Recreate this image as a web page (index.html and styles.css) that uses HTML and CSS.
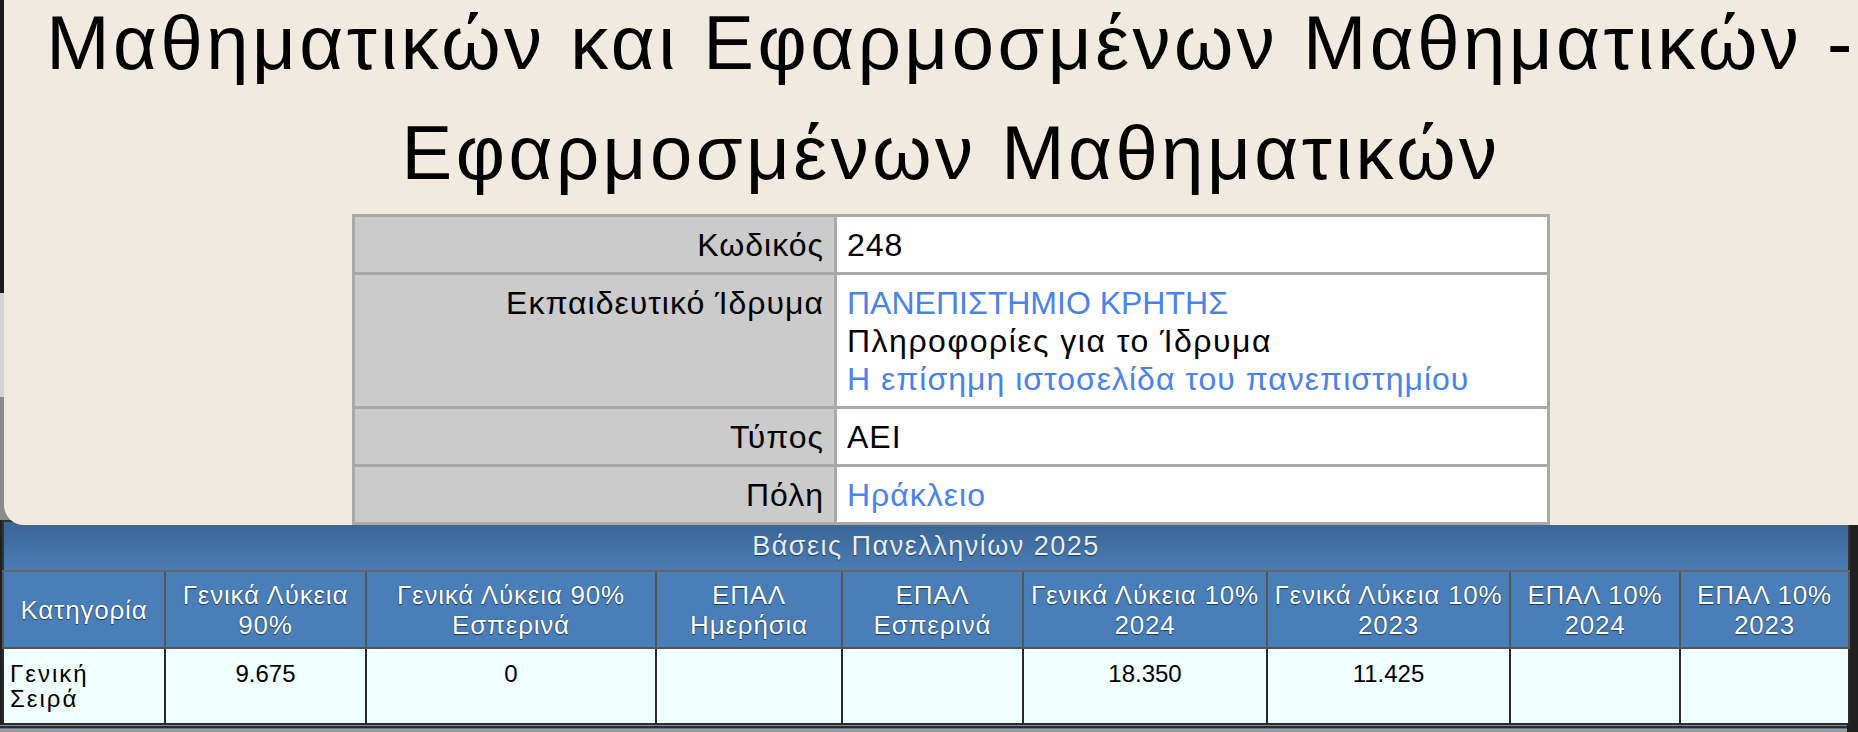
FILE: index.html
```html
<!DOCTYPE html>
<html lang="el">
<head>
<meta charset="utf-8">
<title>Μαθηματικών και Εφαρμοσμένων Μαθηματικών</title>
<link rel="stylesheet" href="styles.css">
</head>
<body>
<div class="screen">
  <div class="top">
    <div class="edge">
      <div class="edge-dark"></div>
      <div class="edge-light"></div>
      <div class="edge-mid"></div>
    </div>
    <div class="panel">
      <h1 class="title">Μαθηματικών και Εφαρμοσμένων Μαθηματικών -<br>Εφαρμοσμένων Μαθηματικών</h1>
      <table class="info">
        <tr>
          <td class="label">Κωδικός</td>
          <td class="value">248</td>
        </tr>
        <tr>
          <td class="label">Εκπαιδευτικό Ίδρυμα</td>
          <td class="value"><a href="#" class="caps">ΠΑΝΕΠΙΣΤΗΜΙΟ ΚΡΗΤΗΣ</a><br><span class="info-line">Πληροφορίες για το Ίδρυμα</span><br><a href="#">Η επίσημη ιστοσελίδα του πανεπιστημίου</a></td>
        </tr>
        <tr>
          <td class="label">Τύπος</td>
          <td class="value">ΑΕΙ</td>
        </tr>
        <tr>
          <td class="label">Πόλη</td>
          <td class="value"><a href="#">Ηράκλειο</a></td>
        </tr>
      </table>
    </div>
  </div>
  <table class="bases">
    <colgroup>
      <col class="c1"><col class="c2"><col class="c3"><col class="c4"><col class="c5"><col class="c6"><col class="c7"><col class="c8"><col class="c9">
    </colgroup>
    <thead>
      <tr class="cap-row"><th colspan="9" class="cap">Βάσεις Πανελληνίων 2025</th></tr>
      <tr class="head-row">
        <th>Κατηγορία</th>
        <th>Γενικά Λύκεια<br>90%</th>
        <th>Γενικά Λύκεια 90%<br>Εσπερινά</th>
        <th>ΕΠΑΛ<br>Ημερήσια</th>
        <th>ΕΠΑΛ<br>Εσπερινά</th>
        <th>Γενικά Λύκεια 10%<br>2024</th>
        <th>Γενικά Λύκεια 10%<br>2023</th>
        <th>ΕΠΑΛ 10%<br>2024</th>
        <th>ΕΠΑΛ 10%<br>2023</th>
      </tr>
    </thead>
    <tbody>
      <tr class="data-row">
        <td class="cat">Γενική<br>Σειρά</td>
        <td>9.675</td>
        <td>0</td>
        <td></td>
        <td></td>
        <td>18.350</td>
        <td>11.425</td>
        <td></td>
        <td></td>
      </tr>
    </tbody>
  </table>
  <div class="below"></div>
</div>
</body>
</html>
```

FILE: styles.css
```css
* { box-sizing: border-box; }
html, body { margin: 0; padding: 0; }
body {
  background: #202020;
  overflow: hidden;
  font-family: "Liberation Sans", Arial, sans-serif;
}
.screen {
  width: 1858px;
  height: 732px;
  overflow: hidden;
  display: flex;
  flex-direction: column;
}
.top {
  display: flex;
  height: 520px;
  flex: none;
  background: #8b8b8b;
  position: relative;
  z-index: 2;
}
.edge {
  width: 4px;
  flex: none;
  display: flex;
  flex-direction: column;
}
.edge-dark { height: 293px; background: #1a1a1a; }
.edge-light { height: 104px; background: #d2d2d2; }
.edge-mid { flex: 1; background: #8b8b8b; }
.panel {
  flex: none;
  width: 1894px;
  height: 525px;
  background: #f0eadf;
  border-bottom-left-radius: 20px;
  overflow: hidden;
  display: flex;
  flex-direction: column;
  align-items: center;
}
.title {
  margin: -12px 0 0;
  font-weight: normal;
  font-size: 76px;
  letter-spacing: 3.5px;
  line-height: 110px;
  text-align: center;
  color: #000;
  white-space: nowrap;
}
.info {
  margin-top: 6px;
  border-collapse: collapse;
  width: 1198px;
  font-size: 32px;
  letter-spacing: 1px;
  color: #000;
}
.info td {
  border: 3px solid #a9a9a9;
  padding: 9px 10px 8px;
  line-height: 38px;
  vertical-align: top;
}
.info .label {
  background: #cbcbcb;
  text-align: right;
  width: 482px;
}
.info .value { background: #fff; }
.info a { color: #4a82ec; text-decoration: none; }
.info .caps { letter-spacing: 0; }
.info .info-line { letter-spacing: 1.5px; }

.bases {
  margin-left: 2px;
  width: 1846px;
  flex: none;
  border-collapse: collapse;
  table-layout: fixed;
  border: 2px solid #333;
  font-size: 26px;
}
.c1 { width: 162px; }
.c2 { width: 201px; }
.c3 { width: 290px; }
.c4 { width: 186px; }
.c5 { width: 181px; }
.c6 { width: 244px; }
.c7 { width: 243px; }
.c8 { width: 170px; }
.c9 { width: 169px; }
.cap {
  height: 50px;
  padding: 0;
  font-weight: normal;
  font-size: 27px;
  letter-spacing: 1.5px;
  color: #e9eef4;
  text-shadow: 0 1px 1px #1d3a5c;
  background: linear-gradient(#3a6594, #4a7cb4);
  border-bottom: 2px solid #646464;
}
.head-row th {
  height: 77px;
  padding: 4px 2px;
  font-weight: normal;
  line-height: 30px;
  letter-spacing: 0.8px;
  color: #fff;
  text-shadow: 0 1px 1px #1a3d66, 0 0 1px #1a3d66;
  background: #4a7eb8;
  border: 2px solid #555;
  vertical-align: middle;
}
.data-row td {
  height: 76px;
  padding: 12px 6px 6px;
  background: #f0ffff;
  color: #000;
  text-align: center;
  vertical-align: top;
  line-height: 25px;
  font-size: 24px;
  border: 2px solid #2a2a2a;
}
.data-row td.cat { text-align: left; letter-spacing: 2px; }
.below {
  flex: none;
  width: 1847px;
  height: 12px;
  background: linear-gradient(#8a8a8a 0 1px, #2b2b2b 1px 3px, #4a7ab0 3px 4px, #9b9b9b 4px);
}
```
